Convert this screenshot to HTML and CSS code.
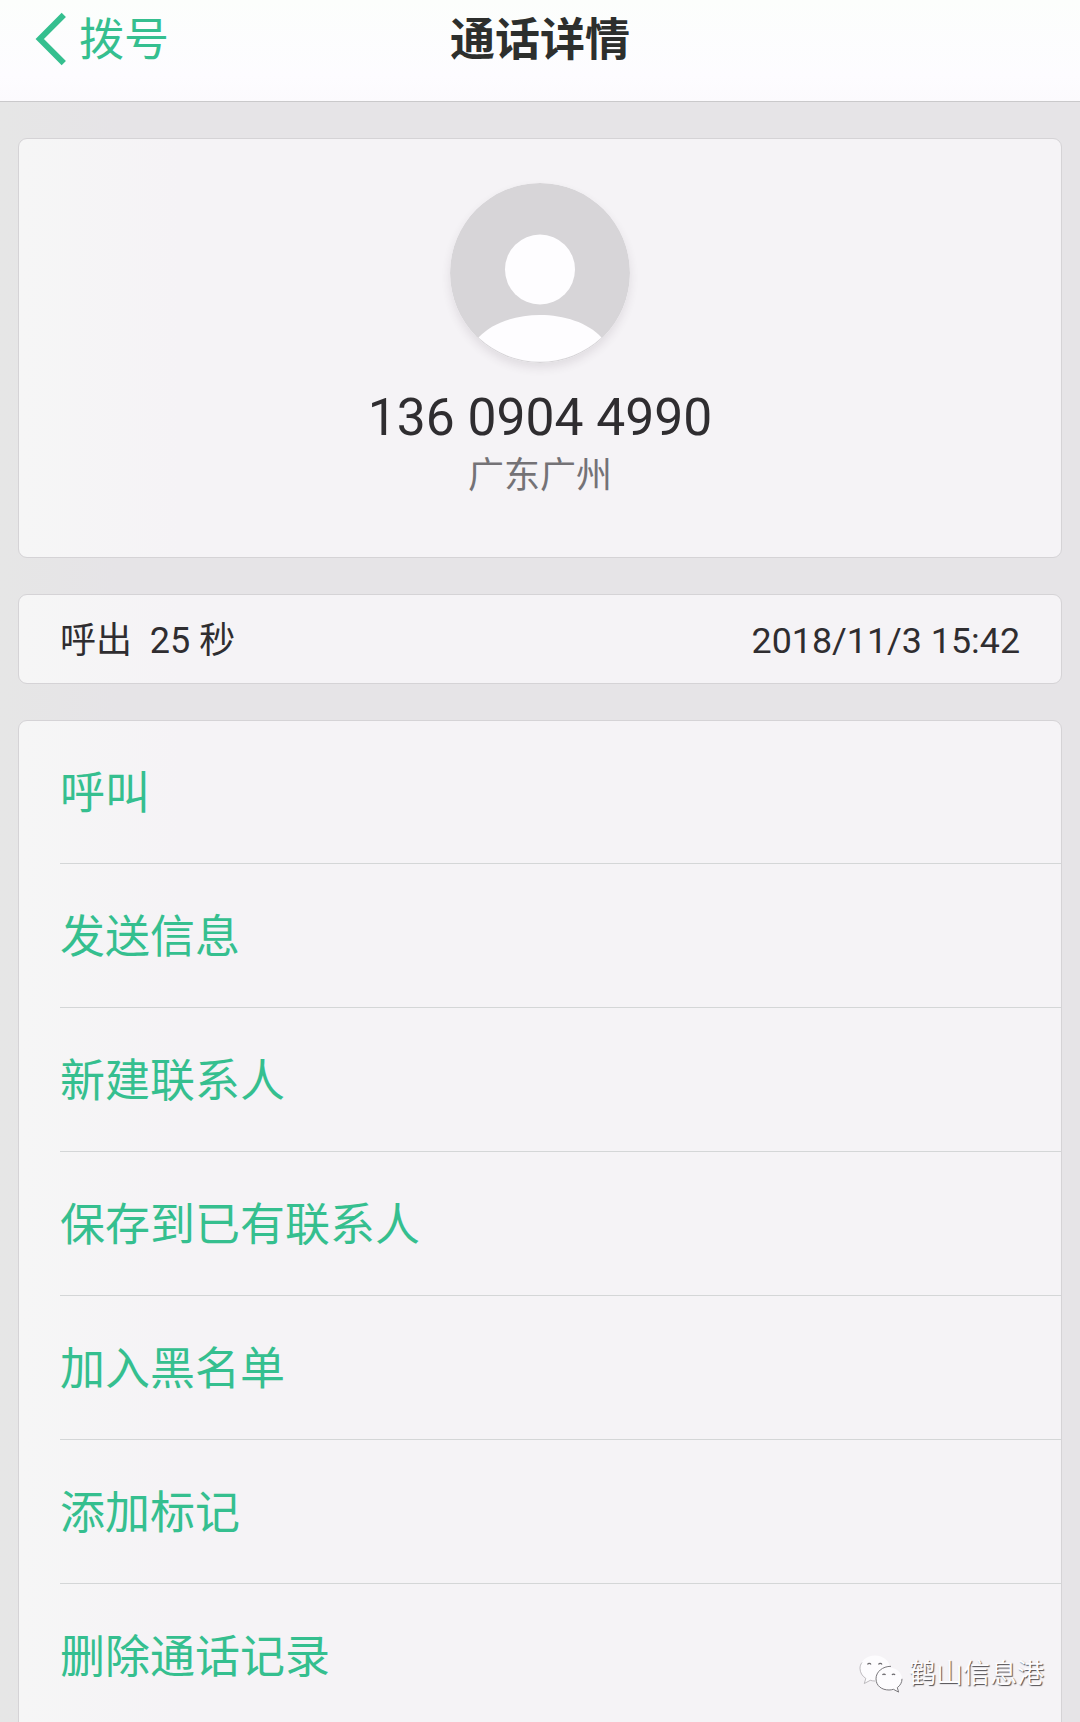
FILE: index.html
```html
<!DOCTYPE html>
<html lang="zh-CN">
<head>
<meta charset="utf-8">
<title>通话详情</title>
<link rel="stylesheet" href="styles.css">
</head>
<body>
<div class="screen">
  <header class="topbar">
    <a class="back">
      <svg class="back-icon" width="32" height="54" viewBox="0 0 32 54"><path d="M28.800 2.800 L4.800 27 L28.800 51.200" fill="none" stroke="#35bf8f" stroke-width="6"/></svg>
      <span>拨号</span>
    </a>
    <h1 class="title">通话详情</h1>
  </header>
  <main class="content">
    <section class="card profile">
      <svg class="avatar" width="180" height="180" viewBox="0 0 180 180">
        <circle cx="90" cy="90" r="90" fill="#d7d5d8"/>
        <circle cx="90" cy="86.500" r="35" fill="#fefdff"/>
        <path d="M28.500 154.500 C56 124.500 124 124.500 151.500 154.500 A90 90 0 0 1 28.500 154.500Z" fill="#fefdff"/>
      </svg>
      <div class="phone">136 0904 4990</div>
      <div class="region">广东广州</div>
    </section>
    <section class="card call">
      <span class="duration">呼出&nbsp; 25 秒</span>
      <time class="date">2018/11/3 15:42</time>
    </section>
    <ul class="card actions">
      <li>呼叫</li>
      <li>发送信息</li>
      <li>新建联系人</li>
      <li>保存到已有联系人</li>
      <li>加入黑名单</li>
      <li>添加标记</li>
      <li>删除通话记录</li>
    </ul>
  </main>
  <div class="watermark">
    <svg width="44" height="40" viewBox="0 0 44 40">
      <g fill="#fdfcfe" stroke="#a3a1a5" stroke-width=".7" stroke-linejoin="round">
        <path d="M16 1.500C7.500 1.500 1 7.200 1 14.300c0 4.200 2.200 7.800 5.800 10.100L5.300 29.500l6-3.200c1.500.5 3.100.7 4.700.7 8.300 0 15-5.500 15-12.700S24.300 1.500 16 1.500Z" stroke="none"/>
        <path d="M3 8.500C1.700 10.200 1 12.200 1 14.300c0 4.200 2.200 7.800 5.800 10.100L5.300 29.500l6-3.200c1.500.5 3.100.7 4.700.7" fill="none"/>
        <path d="M30 13.500c-7.300 0-13 5-13 11.300S22.700 36 30 36c1.600 0 3-.2 4.400-.7l5.200 2.800-1.300-4.500c3-2.100 4.700-5.200 4.700-8.800 0-6.300-5.700-11.300-13-11.300Z" stroke="none"/>
        <path d="M32 12.300c-8.500 0-15 5.500-15 12.500S22.700 36 30 36c1.600 0 3-.2 4.400-.7l5.200 2.800-1.300-4.500c3-2.100 4.700-5.200 4.700-8.800" fill="none" stroke="#79777b" stroke-width="1"/>
      </g>
      <g fill="none" stroke="#6d6b6f" stroke-width="1.200">
        <path d="M8.500 10.500a2 2 0 0 1 3.500 0M19.500 10.500a2 2 0 0 1 3.500 0M23.500 21a1.700 1.700 0 0 1 3 0M33 21a1.700 1.700 0 0 1 3 0"/>
      </g>
    </svg>
    <span>鹤山信息港</span>
  </div>
</div>
</body>
</html>
```
FILE: styles.css
```css
* { box-sizing: border-box; }

body {
  margin: 0;
  font-family: Roboto, "Noto Sans CJK SC", sans-serif;
  color: #2f2d30;
}

.screen {
  position: relative;
  display: flex;
  flex-direction: column;
  height: 1722px;
  overflow: hidden;
  background: linear-gradient(90deg, #e6e6e6 0, #e6e4e7 120px);
}

.topbar {
  display: grid;
  grid-template-columns: 1fr auto 1fr;
  flex: none;
  height: 102px;
  padding: 0 35px;
  border-bottom: 1px solid #cac9cb;
  background: linear-gradient(#fcfefc, #fdfcff 75%, #fcfafd);
}

.back {
  display: flex;
  align-items: center;
  gap: 12px;
  height: 78px;
  color: #35bf8f;
  font-size: 45px;
  line-height: 78px;
}

.back span { padding-top: 4px; }

.title {
  margin: 0;
  padding-top: 2px;
  color: #2d2f2d;
  font-size: 45px;
  font-weight: 700;
  line-height: 78px;
}

.content {
  display: flex;
  flex-direction: column;
  gap: 36px;
  padding: 36px 18px 0;
}

.card {
  flex: none;
  border: 1px solid #d5d3d6;
  border-radius: 9px;
  background: linear-gradient(90deg, #f6f6f6 0, #f5f3f6 160px);
}

.profile {
  display: flex;
  flex-direction: column;
  align-items: center;
  height: 420px;
  padding-top: 44px;
}

.avatar {
  border-radius: 50%;
  box-shadow: 0 5px 10px rgba(60, 50, 65, .11);
}

.phone {
  margin-top: 23px;
  font-size: 51.600px;
  line-height: 64px;
}

.region {
  margin-top: 3px;
  color: #747276;
  font-size: 36px;
  line-height: 46px;
}

.call {
  display: flex;
  align-items: center;
  justify-content: space-between;
  height: 90px;
  padding: 0 41px;
  font-size: 36px;
}

.duration { padding-bottom: 4px; }

.date {
  padding-top: 3px;
  font-size: 35.800px;
}

.actions {
  height: 1020px;
  margin: 0;
  padding: 0 0 0 41px;
  list-style: none;
}

.actions li {
  height: 144px;
  border-bottom: 1px solid #d4d6d7;
  color: #35bf8f;
  font-size: 45px;
  line-height: 147px;
}

.actions li:first-child {
  height: 143px;
  line-height: 145px;
}

.watermark {
  position: absolute;
  right: 36px;
  bottom: 28px;
  display: flex;
  align-items: center;
  gap: 6px;
  color: #fdfcfe;
  font-size: 27px;
  line-height: 40px;
  text-shadow: 1px 1px 1px #4f4d51;
}
```
